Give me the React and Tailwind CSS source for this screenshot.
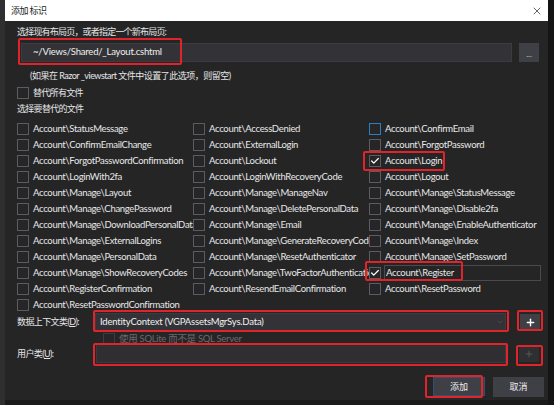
import React from 'react';
import { X, Plus, Check, ChevronDown } from 'lucide-react';

const font = { fontFamily: 'Lato, "Noto Sans CJK SC", sans-serif' };

const col1 = [
  'Account\\StatusMessage',
  'Account\\ConfirmEmailChange',
  'Account\\ForgotPasswordConfirmation',
  'Account\\LoginWith2fa',
  'Account\\Manage\\Layout',
  'Account\\Manage\\ChangePassword',
  'Account\\Manage\\DownloadPersonalData',
  'Account\\Manage\\ExternalLogins',
  'Account\\Manage\\PersonalData',
  'Account\\Manage\\ShowRecoveryCodes',
  'Account\\RegisterConfirmation',
  'Account\\ResetPasswordConfirmation',
];

const col2 = [
  'Account\\AccessDenied',
  'Account\\ExternalLogin',
  'Account\\Lockout',
  'Account\\LoginWithRecoveryCode',
  'Account\\Manage\\ManageNav',
  'Account\\Manage\\DeletePersonalData',
  'Account\\Manage\\Email',
  'Account\\Manage\\GenerateRecoveryCodes',
  'Account\\Manage\\ResetAuthenticator',
  'Account\\Manage\\TwoFactorAuthentication',
  'Account\\ResendEmailConfirmation',
];

const col3 = [
  'Account\\ConfirmEmail',
  'Account\\ForgotPassword',
  'Account\\Login',
  'Account\\Logout',
  'Account\\Manage\\StatusMessage',
  'Account\\Manage\\Disable2fa',
  'Account\\Manage\\EnableAuthenticator',
  'Account\\Manage\\Index',
  'Account\\Manage\\SetPassword',
  'Account\\Register',
  'Account\\ResetPassword',
];

function Box({ checked, focused, disabled }) {
  return (
    <span
      className={`flex items-center justify-center w-[12px] h-[12px] shrink-0 border ${
        focused ? 'border-[#2f7bc4]' : disabled ? 'border-[#3c3c40]' : 'border-[#5c5c60]'
      } bg-[#262628]`}
    >
      {checked && <Check size={10} strokeWidth={3} className="text-white" />}
    </span>
  );
}

function Column({ items, last }) {
  return (
    <div className={`flex flex-col overflow-hidden ${last ? 'w-[172px]' : 'w-[176px]'}`}>
      {items.map((name) => (
        <div key={name} className="flex items-center h-[16px] gap-[4px] whitespace-nowrap">
          <Box checked={name === 'Account\\Login' || name === 'Account\\Register'} focused={name === 'Account\\ConfirmEmail'} />
          {name === 'Account\\Register' ? (
            <span className="text-[9.5px] tracking-[-0.3px] text-[#e8e8e8] leading-[14px] border border-[#4a4a4e] w-[157px] -ml-[1px] pl-[1px]">
              {name}
            </span>
          ) : (
            <span className="text-[9.5px] tracking-[-0.3px] text-[#e8e8e8] leading-[14px]">{name}</span>
          )}
        </div>
      ))}
    </div>
  );
}

function Red({ className }) {
  return <div className={`absolute border-2 border-[#e1232b] rounded-[2px] pointer-events-none ${className}`} />;
}

export default function App() {
  return (
    <div className="relative w-[554px] h-[405px] flex bg-[#1a1a1b]" style={font}>
      <div className="w-[5px] bg-[#2f2f31]" />
      <div className="w-[543px] flex flex-col">
        <div className="h-[21px] bg-white flex items-center justify-between pl-[6px] pr-[5px]">
          <span className="text-[9px] tracking-[-0.6px] text-[#222]">添加 标识</span>
          <X size={12} strokeWidth={1.5} className="text-[#333]" />
        </div>
        <div className="h-[379px] bg-[#252526] pl-[12px] pt-[5px] text-[#e6e6e6]">
          <div className="h-[12px] text-[9px] tracking-[-0.8px] leading-[12px]">选择现有布局页，或者指定一个新布局页:</div>
          <div className="flex mt-[5px]">
            <div className="ml-[4px] w-[491px] h-[19px] bg-[#333337] border border-[#3c3c40] flex items-center pl-[11px] text-[9.5px] tracking-[-0.2px] text-[#f0f0f0]">
              ~/Views/Shared/_Layout.cshtml
            </div>
            <div className="ml-[7px] w-[20px] h-[19px] bg-[#3f3f46] flex items-center justify-center text-[8px] text-[#ccc] pt-[2px]">
              ...
            </div>
          </div>
          <div className="mt-[8px] h-[12px] pl-[13px] text-[9px] tracking-[-0.5px] leading-[12px]">
            (如果在 Razor _viewstart 文件中设置了此选项，则留空)
          </div>
          <div className="mt-[5px] h-[12px] flex items-center gap-[4px]">
            <Box />
            <span className="text-[9px] tracking-[-0.7px]">替代所有文件</span>
          </div>
          <div className="mt-[4px] h-[12px] text-[9px] tracking-[-0.7px] leading-[12px]">选择要替代的文件</div>
          <div className="mt-[6px] flex">
            <Column items={col1} />
            <Column items={col2} />
            <Column items={col3} last />
          </div>
          <div className="flex items-center h-[18px]">
            <span className="w-[78px] text-[9px] tracking-[-0.6px]">数据上下文类(<span className="underline">D</span>):</span>
            <div className="w-[411px] h-[18px] bg-[#333337] border border-[#3c3c40] flex items-center justify-between pl-[4px] pr-[1px] text-[9.5px] tracking-[-0.2px] text-[#f0f0f0]">
              IdentityContext (VGPAssetsMgrSys.Data)
              <ChevronDown size={8} className="text-[#555]" />
            </div>
            <div className="ml-[14px] w-[20px] h-[16px] bg-[#3f3f46] flex items-center justify-center">
              <Plus size={11} strokeWidth={3} className="text-white" />
            </div>
          </div>
          <div className="mt-[2px] h-[10px] overflow-hidden pl-[86px]">
            <div className="flex items-start gap-[4px]">
              <Box disabled />
              <span className="text-[9.5px] tracking-[-0.3px] leading-[12px] text-[#6b6b6e]">使用 SQLite 而不是 SQL Server</span>
            </div>
          </div>
          <div className="mt-[1px] flex items-center h-[19px]">
            <span className="w-[79px] text-[9px] tracking-[-0.6px]">用户类(<span className="underline">U</span>):</span>
            <div className="w-[410px] h-[19px] bg-[#2f2f32] border border-[#3a3a3e]" />
            <div className="ml-[13px] w-[20px] h-[17px] bg-[#2f2f32] flex items-center justify-center">
              <Plus size={10} strokeWidth={2} className="text-[#5e5e62]" />
            </div>
          </div>
          <div className="mt-[14px] flex justify-end pr-[4px] gap-[8px]">
            <div className="w-[52px] h-[19px] bg-[#3f3f46] border border-[#34506e] flex items-center justify-center text-[9px] text-[#eee]">
              添加
            </div>
            <div className="w-[51px] h-[20px] bg-[#3f3f46] flex items-center justify-center text-[9px] text-[#eee]">
              取消
            </div>
          </div>
        </div>
      </div>
      <div className="flex-1 bg-[#141415]" />

      <Red className="left-[18px] top-[38px] w-[164px] h-[27px]" />
      <Red className="left-[363px] top-[151px] w-[82px] h-[20px]" />
      <Red className="left-[365px] top-[261px] w-[98px] h-[20px]" />
      <Red className="left-[93px] top-[310px] w-[416px] h-[22px]" />
      <Red className="left-[517px] top-[310px] w-[26px] h-[21px]" />
      <Red className="left-[93px] top-[343px] w-[415px] h-[23px]" />
      <Red className="left-[516px] top-[345px] w-[27px] h-[21px]" />
      <Red className="left-[425px] top-[375px] w-[58px] h-[23px]" />
    </div>
  );
}
